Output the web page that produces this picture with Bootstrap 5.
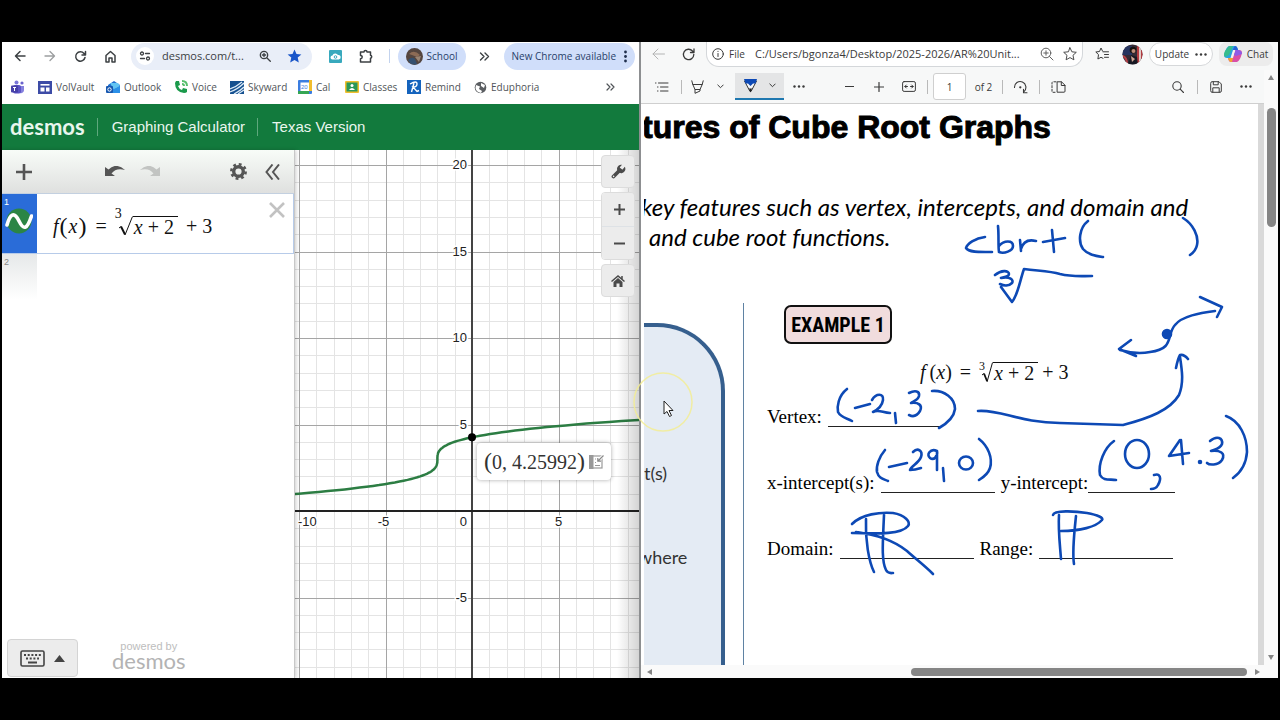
<!DOCTYPE html>
<html lang="en">
<head>
<meta charset="utf-8">
<meta name="viewport" content="width=device-width, initial-scale=1">
<title>Graphing Calculator and Cube Root Notes</title>
<link href="https://cdn.jsdelivr.net/npm/bootstrap@5.3.0/dist/css/bootstrap.min.css" rel="stylesheet">
<style>
  body { background: #000; padding: 42px 2px; font-family: "Open Sans", sans-serif; font-size: 11px; line-height: 16px; color: #3c4043; height: 100vh; }
  button { background: none; border: 0; padding: 0; color: inherit; display: flex; align-items: center; justify-content: center; flex-shrink: 0; }
  svg { display: block; flex-shrink: 0; }
  a { color: inherit; text-decoration: none; }
  input { background: none; border: 0; padding: 0; color: inherit; min-width: 0; outline: 0; }
  .line { fill: none; stroke: currentColor; stroke-linecap: round; stroke-linejoin: round; }
  .pane { flex: 1 1 0; min-width: 0; background: #fff; }
  .pane-left { border-right: 2px solid #8d8f91; }

  /* Chrome */
  .chrome-row { height: 28px; padding: 0 4px 0 3px; }
  .chrome-row button.ic { width: 30px; height: 28px; }
  .omni { background: #e9eef8; border-radius: 14px; height: 27px; margin-left: 6px; margin-right: 9px; padding: 0 10px 0 5px; }
  .omni input { width: 40px; }
  .site-info { width: 18px; height: 18px; border-radius: 9px; background: #fff; }
  .chip { background: #d0defa; border-radius: 14px; height: 27px; color: #28406a; font-size: 10px; }
  .vr-soft { width: 1px; height: 14px; background: #c3d3ee; }
  .marks { display: grid; grid-template-columns: 27px 68px 68px 56px 68px 47px 62px 67px 1fr 30px; height: 34px; padding: 0 14px 0 9px; align-items: center; font-size: 10px; color: #505458; }
  .marks a { display: flex; align-items: center; gap: 4px; white-space: nowrap; }
  .desmos-bar { background: #127a3d; height: 46px; font-family: "Liberation Sans", sans-serif; font-size: 15px; padding: 0 8px; color: #e9f6ee; }
  .brand-word { font-family: Lato, sans-serif; font-weight: 700; font-size: 22px; line-height: 24px; }
  .bar-line { width: 1px; height: 18px; background: #5fa87d; margin: 0 14px 0 12px; }

  /* Calculator */
  .exprs { width: 293px; border-right: 1px solid #c8c8c8; box-shadow: 1px 0 4px #0003; z-index: 1; background: #fff; flex-shrink: 0; }
  .expr-tools { height: 44px; background: linear-gradient(#f8fcf8, #dfe0df); border-bottom: 1px solid #c3d0e0; color: #555; padding: 0 5px 0 10px; }
  .undo-group { margin-left: 69px; gap: 15px; }
  .expr-one { height: 60px; border: solid #b7cbe9; border-width: 0 1px 1px 0; }
  .expr-tab { width: 35px; font: 9px/12px "Liberation Sans", sans-serif; padding: 2px 2px; }
  .expr-one .expr-tab { background: #2a6cd8; color: #fff; }
  .expr-two .expr-tab { height: 46px; color: #888; background: linear-gradient(#e6e8e9, #fff); }
  .serif-math { font-family: "Liberation Serif", serif; color: #111; white-space: nowrap; }
  .expr-math { font-size: 20px; line-height: 20px; padding: 5px 0 0 16px; }
  .paren { font-size: 24px; padding: 0 1px; }
  .radicand { border-top: 1px solid #111; padding: 0 4px 0 1px; }
  .root-index { font-size: 14px; line-height: 12px; align-self: flex-start; }
  .expr-math .root-index { margin: 9px -5px 0 0; }
  .fn .root-index { font-size: 12px; margin-right: -5px; }
  .kbd-btn { width: 71px; height: 38px; border: 1px solid #d4d4d4; border-radius: 4px; background: #ececec; color: #444; gap: 9px; }
  .powered { font: 11px/14px "Liberation Sans", sans-serif; color: #bdbdbd; margin: 0 0 8px 34px; }
  .powered .brand-word { font-weight: 400; font-size: 22px; line-height: 16px; color: #b3b3b3; }
  .graph { overflow: hidden; background: #fff; min-width: 0; }
  .graph::after { content: ""; position: absolute; inset: 0 0 0 auto; width: 22px; background: linear-gradient(90deg, #0000, #0000002b); }
  .graph text { font: 13px "Liberation Sans", sans-serif; fill: #222; paint-order: stroke; stroke: #fff; stroke-width: 3px; }
  .ctl { right: 4px; top: 5px; z-index: 2; width: 34px; color: #4a4a4a; }
  .ctl button { width: 34px; height: 33px; background: #ececec; }
  .ctl > * { border: 1px solid #dcdcdc; border-radius: 4px; overflow: hidden; }
  .coord { left: 182px; top: 293px; width: 134px; height: 37px; background: #fff; border-radius: 4px; box-shadow: 0 0 4px #0005; font: 20px/26px "Liberation Serif", serif; color: #333; }
  .coord .paren { padding: 0; }

  /* Edge */
  .edge { background: #f7f8f8; color: #3a3a3a; }
  .edge-row { height: 28px; padding: 0 5px 0 2px; }
  .edge-row button.ic { width: 30px; height: 24px; }
  .edge-omni { height: 25px; border: 1px solid #d4d7da; border-top: 0; border-radius: 0 0 13px 13px; background: #fff; margin-left: 3px; padding: 0 5px; gap: 5px; }
  .edge-omni .scheme { width: 21px; font-size: 10px; }
  .edge-chip { height: 24px; border: 1px solid #d6d8da; border-radius: 12px; background: #fff; gap: 6px; margin-left: 2px; width: 64px; font-size: 10px; }
  .chat-chip { height: 24px; border-radius: 8px; background: #ececec; gap: 5px; margin-left: 6px; width: 54px; font-size: 10px; }
  .pdf-tools { display: grid; height: 34px; padding: 0 6px 0 3px; align-items: center; justify-items: center; border-bottom: 1px solid #cfcfcf;
    grid-template-columns: 36px 2px 30px 16px 7px 49px 30px 20px 30px 29px 32px 4px 4px 33px 35px 2px 35px 2px 36px 1fr 36px 2px 36px 24px; }
  .tsep { width: 1px; height: 14px; background: #b9b9b9; }
  .pen-on { width: 49px; height: 27px; background: #e4e5e6; border-bottom: 2px solid #1f78b0; gap: 12px; }
  .pg-input { width: 33px; height: 27px; border: 1px solid #cfcfcf; border-radius: 3px; background: #fff; text-align: center; font-size: 10px; }
  .vbar { width: 14px; background: #fafafa; padding: 5px 3px; }
  .vthumb { width: 9px; height: 119px; border-radius: 5px; background: #858585; margin-top: 28px; }
  .hbar { height: 13px; background: #fafafa; padding: 0 18px 0 6px; }
  .hthumb { width: 336px; height: 8px; border-radius: 4px; background: #858585; }
  .sheet-wrap { padding-left: 3px; border-right: 6px solid #d9d9d9; background: #fff; min-height: 0; }
  .sheet { position: relative; height: 100%; overflow: hidden; color: #000; background: #fff; }
  .sheet-title { font: bold 32px/46px "Liberation Sans", sans-serif; -webkit-text-stroke: 1px #000; margin: 0 0 42px -2px; white-space: nowrap; color: #000; }
  .goal { font: italic 24px/30px Lato, sans-serif; margin: 0 0 51px -3px; white-space: nowrap; }
  .goal-cont { margin-left: 8px; }
  .notes-col { width: 100px; border-right: 1px solid #5f82a3; padding-top: 20px; flex-shrink: 0; }
  .blue-box { width: 81px; border: solid #365f8e; border-width: 4px 4px 0 0; border-radius: 0 68px 0 0; background: #e4ebf4; font: 18px/24px Lato, sans-serif; color: #333; padding-top: 134px; overflow: hidden; }
  .blue-box p { margin: 0 0 60px; }
  .blue-box p + p { margin-left: -6px; }
  .work { padding: 2px 0 0 23px; font: 19px/24px "Liberation Serif", serif; }
  .example { width: 108px; height: 39px; border: 2px solid #111; border-radius: 7px; background: #f0dcdd; margin-left: 17px; font: bold 20px/36px "Liberation Sans Narrow", "Roboto Condensed", sans-serif; text-align: center; }
  .fn { margin: 16px 0 21px 153px; height: 24px; font-size: 20px; }
  .blank { border-bottom: 1px solid #222; height: 22px; }
  .qrow { height: 24px; margin-bottom: 42px; gap: 6px; white-space: nowrap; }
  .ink { left: 0; top: 0; pointer-events: none; fill: none; stroke: #0d49b5; stroke-width: 2.6; stroke-linecap: round; stroke-linejoin: round; }
  .pointer { left: -10px; top: 328px; pointer-events: none; }
</style>
</head>
<body class="d-flex">

<section class="pane pane-left d-flex flex-column">
  <nav class="chrome-row d-flex align-items-center">
    <button class="ic" aria-label="Back"><svg width="12" height="12" viewBox="0 0 12 12" class="line" stroke-width="1.5"><path d="M11 6H2M6 1.500L1.500 6L6 10.500"/></svg></button>
    <button class="ic" aria-label="Forward"><svg width="12" height="12" viewBox="0 0 12 12" class="line" stroke-width="1.3" opacity=".5"><path d="M1 6h9M6 1.500L10.500 6L6 10.500"/></svg></button>
    <button class="ic" aria-label="Reload"><svg width="13" height="13" viewBox="0 0 13 13" class="line" stroke-width="1.5"><path d="M11 7.500A4.700 4.700 0 1 1 10 3.400L11.300 4.700M11.500 1.500V5H8"/></svg></button>
    <button class="ic" aria-label="Home"><svg width="13" height="13" viewBox="0 0 13 13" class="line" stroke-width="1.5"><path d="M2 12V5.500L6.500 1.500L11 5.500V12H8V8H5V12Z"/></svg></button>
    <div class="omni d-flex align-items-center flex-fill">
      <button class="site-info" aria-label="Site information"><svg width="12" height="10" viewBox="0 0 12 10" class="line" stroke-width="1.3"><circle cx="3" cy="2.500" r="1.500"/><path d="M6.500 2.500h4M1.500 7.500h4"/><circle cx="9" cy="7.500" r="1.500"/></svg></button>
      <input class="flex-fill ms-2" aria-label="Address" value="desmos.com/t...">
      <button class="me-3" aria-label="Zoom"><svg width="12" height="12" viewBox="0 0 12 12" class="line" stroke-width="1.300"><circle cx="5" cy="5" r="3.700"/><path d="M8 8l3.300 3.300M3.300 5h3.400M5 3.300v3.400"/></svg></button>
      <button aria-label="Bookmark"><svg width="15" height="14" viewBox="0 0 15 14" fill="#1a56c9"><path d="M7.500 .5L9.500 5l4.900.4-3.700 3.200 1.100 4.800-4.300-2.500-4.300 2.500 1.100-4.800L.6 5.400 5.500 5Z"/></svg></button>
    </div>
    <button class="ic" aria-label="Cloud extension"><svg width="13" height="13" viewBox="0 0 13 13"><rect width="13" height="13" rx="1" fill="#38a9bd"/><path d="M3.500 9.500a2 2 0 0 1 0-4A3 3 0 0 1 9 5a2.200 2.200 0 0 1 .8 4.500Z" fill="#fff"/><circle cx="6.500" cy="7" r="1.300" fill="none" stroke="#38a9bd"/></svg></button>
    <button class="ic" aria-label="Extensions"><svg width="14" height="14" viewBox="0 0 14 14" class="line" stroke-width="1.500"><path d="M1.500 3H5a1.500 1.500 0 0 1 3 0h3.500v3.200a1.600 1.600 0 0 1 0 3.100V13H1.500V9.800a1.700 1.700 0 0 0 0-3.400Z"/></svg></button>
    <span class="vr-soft ms-2 me-2"></span>
    <button class="chip px-2 gap-1"><svg width="17" height="17" viewBox="0 0 17 17"><circle cx="8.500" cy="8.500" r="8.500" fill="#54453f"/><path d="M3 6q5-5 11 1l-3 2-5-2Z" fill="#8d6b55"/><path d="M2 12q4-4 7-1l2 5q-6 2-9-4Z" fill="#35506f"/><path d="M9 9l6-1-2 6Z" fill="#9a8473"/></svg>School</button>
    <button class="ic ms-1" aria-label="More extensions"><svg width="11" height="9" viewBox="0 0 11 9" class="line" stroke-width="1.400"><path d="M1.500 1L5 4.500L1.500 8M6 1l3.500 3.500L6 8"/></svg></button>
    <button class="chip ms-1 px-2 gap-2">New Chrome available<svg width="3" height="13" viewBox="0 0 3 13" fill="#1f2f4d"><circle cx="1.500" cy="2" r="1.400"/><circle cx="1.500" cy="6.500" r="1.400"/><circle cx="1.500" cy="11" r="1.400"/></svg></button>
  </nav>

  <div class="marks">
    <a href="#" aria-label="Teams"><svg width="14" height="14" viewBox="0 0 14 14"><circle cx="5.500" cy="2.500" r="2" fill="#7b78d8"/><circle cx="11" cy="3" r="1.600" fill="#6a63cc"/><path d="M8 6h5v4a3 3 0 0 1-4 3Z" fill="#8580de"/><rect x="2" y="5" width="8" height="8.500" rx="2" fill="#5a53c4"/><rect x="0" y="5.500" width="7" height="7" rx="1" fill="#4640a8"/><path d="M2 7.500h3M3.500 7.500v3.500" stroke="#fff"/></svg></a>
    <a href="#"><svg width="14" height="13" viewBox="0 0 14 13"><rect width="14" height="13" fill="#3c4ba6"/><path d="M2.500 3.800h9" stroke="#fff" stroke-width="1.600"/><path d="M2.500 6.500h4v4h-4zM8 6.500h3.500v4H8z" fill="#fff"/></svg>VolVault</a>
    <a href="#"><svg width="14" height="14" viewBox="0 0 14 14"><path d="M2 5l6-4 6 4v7H2Z" fill="#1f6fd0"/><path d="M4 3h8l2 3-6 4Z" fill="#62c4f2"/><path d="M8 9l6-3v7H5Z" fill="#2b90e8"/><rect y="6" width="7" height="7" rx="1" fill="#1657b0"/><circle cx="3.500" cy="9.500" r="1.700" fill="none" stroke="#fff"/></svg>Outlook</a>
    <a href="#"><svg width="14" height="14" viewBox="0 0 14 14"><path d="M2 1l3 0 1 4-2 1q1 3 4 4l1-2 4 1v3q-1 1-3 1Q1 12 1 3Z" fill="#1b9a4b"/><path d="M8 1q5 0 5 5M8 4q2 0 2 2" fill="none" stroke="#58bf6d" stroke-width="2"/></svg>Voice</a>
    <a href="#"><svg width="14" height="13" viewBox="0 0 14 13"><rect width="14" height="13" fill="#15508f"/><path d="M0 8Q6 6 12 1M0 11Q8 8 14 2M4 13Q10 10 14 6M8 13l6-4" fill="none" stroke="#dcebf7" stroke-width="1.300"/></svg>Skyward</a>
    <a href="#"><svg width="14" height="14" viewBox="0 0 14 14"><rect width="14" height="14" rx="1" fill="#3b7de0"/><path d="M11 0h3v11h-3z" fill="#f2bd2c"/><path d="M0 11h11v3H0z" fill="#35a653"/><rect x="2.500" y="2.500" width="8.500" height="8.500" fill="#fff"/><text x="3" y="9" font-size="6" fill="#3b7de0" font-family="Liberation Sans, sans-serif">20</text></svg>Cal</a>
    <a href="#"><svg width="14" height="12" viewBox="0 0 14 12"><rect width="14" height="12" rx="1" fill="#f0bf2f"/><rect x="1.500" y="1.500" width="11" height="9" fill="#2b9757"/><circle cx="7" cy="4.500" r="1.500" fill="#fff"/><path d="M4 9q3-4 6 0Z" fill="#fff"/></svg>Classes</a>
    <a href="#"><svg width="14" height="14" viewBox="0 0 14 14"><rect width="14" height="14" fill="#1463bd"/><path d="M3 4q7-4 7 0 0 3-4 3l4 4.500 2-1M7 3L4.500 12" fill="none" stroke="#fff" stroke-width="1.400"/></svg>Remind</a>
    <a href="#"><svg width="13" height="13" viewBox="0 0 13 13"><circle cx="6.500" cy="6.500" r="5.800" fill="#5b5e62"/><path d="M2 4l4 1.500L5 8l3 2-1 2Q2 11 1.500 7ZM7 2l4 2-1 3-3-2Z" fill="#fff"/></svg>Eduphoria</a>
    <button aria-label="More bookmarks"><svg width="9" height="8" viewBox="0 0 9 8" class="line" stroke-width="1.200"><path d="M1 1l3 3-3 3M5 1l3 3-3 3"/></svg></button>
  </div>

  <header class="desmos-bar d-flex align-items-center">
    <a href="#" class="brand-word">desmos</a>
    <span class="bar-line"></span>
    <span>Graphing Calculator</span>
    <span class="bar-line"></span>
    <span>Texas Version</span>
  </header>

  <main class="d-flex flex-fill" style="min-height:0">
    <div class="exprs d-flex flex-column">
      <div class="expr-tools d-flex align-items-center">
        <button aria-label="Add item" style="width:24px"><svg width="16" height="16" viewBox="0 0 16 16" stroke="currentColor" stroke-width="2.600"><path d="M0 8h16M8 0v16"/></svg></button>
        <div class="undo-group d-flex">
          <button aria-label="Undo"><svg width="20" height="12" viewBox="0 0 20 12" fill="currentColor"><path d="M0 1v9h10L6.500 7.500Q11 1.500 20 4Q11-4 3.500 3.500Z"/></svg></button>
          <button aria-label="Redo"><svg width="20" height="12" viewBox="0 0 20 12" fill="#c2c4c2"><path d="M20 1v9H10l3.500-2.500Q9 1.500 0 4Q9-4 16.500 3.500Z"/></svg></button>
        </div>
        <button class="ms-auto me-2" aria-label="Settings"><svg width="17" height="17" viewBox="0 0 17 17"><circle cx="8.500" cy="8.500" r="4.800" fill="none" stroke="currentColor" stroke-width="3.400"/><circle cx="8.500" cy="8.500" r="7.200" fill="none" stroke="currentColor" stroke-width="2.500" stroke-dasharray="2.830 2.830"/></svg></button>
        <button aria-label="Hide list" style="width:34px"><svg width="15" height="16" viewBox="0 0 15 16" fill="none" stroke="currentColor" stroke-width="2"><path d="M7.500 .5L1.500 8l6 7.500M14 .5L8 8l6 7.500"/></svg></button>
      </div>
      <div class="expr-one d-flex">
        <div class="expr-tab">1
          <svg width="29" height="26" viewBox="0 0 29 26"><circle cx="15" cy="13" r="12.500" fill="#2b8545"/><path d="M3 17C6 6 10 3 15 13S23 21 27.500 8" fill="none" stroke="#fff" stroke-width="3.600" stroke-linecap="round"/></svg>
        </div>
        <div class="expr-math serif-math d-flex align-items-center flex-fill">
          <i>f</i><span class="paren">(</span><i>x</i><span class="paren">)</span><span class="ms-2 me-2">=</span><span class="root-index">3</span><svg width="16" height="20" viewBox="0 0 16 20" fill="none" stroke="#111"><path d="M2 12l2-1.500" /><path d="M4 10.500L8 18.500" stroke-width="2"/><path d="M8 19L15.500 .5"/></svg><span class="radicand"><i>x</i> + 2</span><span class="ms-2">+ 3</span>
        </div>
        <button class="align-self-start mt-2 me-2" aria-label="Delete expression"><svg width="16" height="16" viewBox="0 0 16 16" stroke="#c2c2c2" stroke-width="2.600"><path d="M1 1l14 14M15 1L1 15"/></svg></button>
      </div>
      <div class="expr-two"><div class="expr-tab">2</div></div>
      <div class="mt-auto d-flex align-items-center" style="padding:0 0 1px 5px">
        <button class="kbd-btn" aria-label="Keypad"><svg width="25" height="17" viewBox="0 0 25 17"><rect x="1" y="1" width="23" height="15" rx="1.500" fill="none" stroke="currentColor" stroke-width="1.600"/><path d="M4 5h17M6 8.500h13" stroke="currentColor" stroke-width="2" stroke-dasharray="2 1.700"/><path d="M8 12.500h9" stroke="currentColor" stroke-width="2"/></svg><svg width="11" height="7" viewBox="0 0 11 7" fill="currentColor"><path d="M0 7L5.500 0L11 7Z"/></svg></button>
        <a href="#" class="powered text-center"><span class="d-block">powered by</span><span class="d-block brand-word">desmos</span></a>
      </div>
    </div>

    <div class="graph position-relative flex-fill">
      <svg id="plot" width="100%" height="100%" role="img" aria-label="Graph of f(x)"></svg>
      <div class="ctl position-absolute d-flex flex-column gap-1">
        <button aria-label="Graph settings"><svg width="15" height="15" viewBox="0 0 15 15"><path d="M2.500 12.500L9 6" stroke="currentColor" stroke-width="3.800" stroke-linecap="round"/><path d="M13.800 2.800A4.200 4.200 0 1 1 11 .8L8.800 3.200L9.300 5.200L11.600 5.600Z" fill="currentColor"/><circle cx="2.600" cy="12.400" r=".8" fill="#ececec"/></svg></button>
        <div><button aria-label="Zoom in"><svg width="11" height="11" viewBox="0 0 11 11" stroke="currentColor" stroke-width="2"><path d="M0 5.500h11M5.500 0v11"/></svg></button><button aria-label="Zoom out" class="border-top"><svg width="11" height="11" viewBox="0 0 11 11" stroke="currentColor" stroke-width="2"><path d="M0 5.500h11"/></svg></button></div>
        <button aria-label="Default view"><svg width="14" height="12" viewBox="0 0 14 12"><path d="M2.500 7L7 3l4.500 4v5h-3V8.500h-3V12h-3Z" fill="currentColor"/><path d="M.5 6.500L7 1l6.500 5.500M11 1v3" fill="none" stroke="currentColor" stroke-width="1.500"/></svg></button>
      </div>
      <div class="coord position-absolute d-flex align-items-center justify-content-center gap-1"><span><span class="paren">(</span>0, 4.25992<span class="paren">)</span></span><svg width="15" height="14" viewBox="0 0 15 14"><rect x="1" y="1" width="12" height="12" fill="none" stroke="#999" stroke-width="1.200"/><rect width="4.500" height="14" fill="#999"/><path d="M6 4h3M6 7.500h5M6 10.500h5" stroke="#999"/><path d="M15 0L9 6M8.500 3v3.500H12" fill="none" stroke="#fff" stroke-width="3"/><path d="M14.500 .5L9 6M8.800 3v3.200H12" fill="none" stroke="#888" stroke-width="1.200"/></svg></div>
    </div>
  </main>
</section>

<section class="pane edge d-flex flex-column position-relative">
  <nav class="edge-row d-flex align-items-start">
    <button class="ic" aria-label="Back"><svg width="13" height="12" viewBox="0 0 13 12" class="line" opacity=".35"><path d="M12.500 6H1M6 1L1 6l5 5"/></svg></button>
    <button class="ic" aria-label="Refresh"><svg width="13" height="13" viewBox="0 0 13 13" class="line" stroke-width="1.300"><path d="M11.800 6.500A5.200 5.200 0 1 1 10.500 3L11.800 4.300M12 1v3.500H8.500"/></svg></button>
    <div class="edge-omni d-flex align-items-center flex-fill">
      <svg width="12" height="12" viewBox="0 0 12 12" class="line"><circle cx="6" cy="6" r="5.300"/><path d="M6 5.500v3M6 3.300v.2"/></svg>
      <span class="scheme">File</span>
      <input class="flex-fill" aria-label="File address" value="C:/Users/bgonza4/Desktop/2025-2026/AR%20Unit...">
      <button aria-label="Zoom" class="me-1"><svg width="14" height="14" viewBox="0 0 14 14" class="line" opacity=".8"><circle cx="6" cy="6" r="4.800"/><path d="M9.500 9.500l3.500 3.500M3.800 6h4.400M6 3.800v4.400"/></svg></button>
      <button aria-label="Favourite"><svg width="14" height="14" viewBox="0 0 14 14" class="line" opacity=".9"><path d="M7 .8l1.900 4 4.400.5-3.300 3 .9 4.500L7 10.600l-3.900 2.200L4 8.300l-3.300-3 4.400-.5Z"/></svg></button>
    </div>
    <button class="ic ms-1" aria-label="Favourites"><svg width="15" height="14" viewBox="0 0 15 14" class="line"><path d="M8 4.800H13.500M9.500 7.500h4M9.500 10.300h4M7.500 4L6 1 4.500 4.500 .8 5l2.700 2.600-.6 4.400L6 10.300l2 1"/></svg></button>
    <button class="ic" aria-label="Profile"><svg width="21" height="21" viewBox="0 0 21 21"><clipPath id="av"><circle cx="10.500" cy="10.500" r="10"/></clipPath><g clip-path="url(#av)"><rect width="21" height="21" fill="#352b35"/><path d="M0 2h10v9H0z" fill="#26345f"/><path d="M15 0h2v21h-2zM19 0h2v21h-2z" fill="#b33a3f"/><path d="M17 0h2v21h-2z" fill="#e0c9c5"/><path d="M1 12q4 2 4 8" stroke="#b54047" stroke-width="2" fill="none"/><circle cx="11" cy="6" r="3.300" fill="#15110f"/><circle cx="11.500" cy="7" r="2" fill="#c08e7a"/><path d="M6 20l3-9 6 2 1 8Z" fill="#171923"/><path d="M9 12l4 3-3 3Z" fill="#d2a594"/></g></svg></button>
    <button class="edge-chip">Update<svg width="12" height="3" viewBox="0 0 12 3" fill="currentColor"><circle cx="1.500" cy="1.500" r="1.200"/><circle cx="6" cy="1.500" r="1.200"/><circle cx="10.500" cy="1.500" r="1.200"/></svg></button>
    <button class="chat-chip"><svg width="18" height="18" viewBox="0 0 18 18"><path d="M5 1h6q2 0 2.500 2L14 5H9L6.500 13H3Q0 13 0 10Q2 2 5 1Z" fill="#2aa4df"/><path d="M5 1h4L5 10 1 12Q-1 10 1 6Z" fill="#37bc8c"/><path d="M11 1q2 0 3 4H9l1-3Z" fill="#2861d8"/><path d="M13 17H7q-2 0-2.500-2L4 13h5L11.500 5H15Q18 5 18 8q-2 8-5 9Z" fill="#d94fa7"/><path d="M4 13h5l-1 4H7q-2 0-3-4Z" fill="#f3a42f"/><path d="M11.500 5H15q3 1 3 4l-6 2-2-1Z" fill="#8e5ce6"/><path d="M9.500 5.500h1.500L8.500 12.500H7Z" fill="#f4f4f4"/></svg>Chat</button>
  </nav>

  <div class="d-flex flex-fill" style="min-height:0">
    <div class="d-flex flex-column flex-fill" style="min-width:0">
      <div class="pdf-tools">
        <button aria-label="Contents"><svg width="14" height="10" viewBox="0 0 14 10" class="line"><path d="M3.500 1H13M5.500 5H13M5.500 9H13M.5 1h.5M2.500 5h.5M2.500 9h.5"/></svg></button>
        <span class="tsep"></span>
        <button aria-label="Highlight"><svg width="13" height="14" viewBox="0 0 13 14" class="line"><path d="M.8 .8L1.800 4.500H11.200L12.200 .8M1.800 4.500L4 9.500H9L11.200 4.500M4 9.500V13.300L9 11V9.500"/></svg></button>
        <button aria-label="Highlight colours"><svg width="7" height="5" viewBox="0 0 7 5" class="line"><path d="M.8 1l2.700 2.700L6.200 1"/></svg></button>
        <span></span>
        <button class="pen-on" aria-label="Draw"><svg width="13" height="14" viewBox="0 0 13 14"><path d="M.5 2h12L7 12.500H6Z" fill="#f4f6fa" stroke="#333"/><path d="M0 0h13L11.500 4.500H9L6.500 7 4 4.500H1.500Z" fill="#0d49b5"/><path d="M5 9.500h3L6.500 13.500Z" fill="#222"/></svg><svg width="7" height="5" viewBox="0 0 7 5" class="line"><path d="M.8 1l2.700 2.700L6.200 1"/></svg></button>
        <button aria-label="More tools"><svg width="12" height="3" viewBox="0 0 12 3" fill="currentColor"><circle cx="1.500" cy="1.500" r="1.200"/><circle cx="6" cy="1.500" r="1.200"/><circle cx="10.500" cy="1.500" r="1.200"/></svg></button>
        <span></span>
        <button aria-label="Zoom out"><svg width="9" height="9" viewBox="0 0 9 9" class="line" stroke-width="1.200"><path d="M.5 4.500h8"/></svg></button>
        <button aria-label="Zoom in"><svg width="10" height="10" viewBox="0 0 10 10" class="line" stroke-width="1.200"><path d="M.5 5h9M5 .5v9"/></svg></button>
        <button aria-label="Fit to width"><svg width="14" height="11" viewBox="0 0 14 11" class="line"><rect x=".6" y=".6" width="12.800" height="9.800" rx="1.500"/><path d="M3 5.500h2.500M8.500 5.500H11M4.300 4L2.800 5.500 4.300 7M9.700 4l1.500 1.500L9.700 7"/></svg></button>
        <span class="tsep"></span><span></span>
        <input class="pg-input" aria-label="Page" value="1">
        <span style="font-size:10px">of 2</span>
        <span class="tsep"></span>
        <button aria-label="Rotate"><svg width="15" height="14" viewBox="0 0 15 14" class="line" stroke-width="1.100"><path d="M1.500 7.500A5.700 5.700 0 1 1 11 11.500M14 12.800H10.500V9.300"/><circle cx="7.300" cy="7.300" r=".6"/></svg></button>
        <span class="tsep"></span>
        <button aria-label="Page view"><svg width="15" height="12" viewBox="0 0 15 12" class="line"><path d="M6.500 .8h4L14 4.200v6q0 1-1 1H6.500ZM10.300 1v3.500H14"/><path d="M5 .8H2Q1 .8 1 2v8.500q0 .8 1 .8h3" stroke-dasharray="2 1.600"/></svg></button>
        <span></span>
        <button aria-label="Search"><svg width="12" height="12" viewBox="0 0 12 12" class="line" stroke-width="1.100"><circle cx="5" cy="5" r="4.200"/><path d="M8.200 8.200l3.300 3.300"/></svg></button>
        <span class="tsep"></span>
        <button aria-label="Save"><svg width="12" height="12" viewBox="0 0 12 12" class="line"><path d="M.7 2q0-1.300 1.300-1.300h7L11.300 3v7q0 1.300-1.300 1.300H2Q.7 11.300 .7 10ZM3.300 1v2.800h4.900V1M2.800 11V6.800h6.400V11"/></svg></button>
        <button aria-label="More"><svg width="12" height="3" viewBox="0 0 12 3" fill="currentColor"><circle cx="1.500" cy="1.500" r="1.200"/><circle cx="6" cy="1.500" r="1.200"/><circle cx="10.500" cy="1.500" r="1.200"/></svg></button>
      </div>

      <div class="sheet-wrap flex-fill">
        <article class="sheet d-flex flex-column">
          <h1 class="sheet-title">tures of Cube Root Graphs</h1>
          <p class="goal">key features such as vertex, intercepts, and domain and<br><span class="goal-cont">and cube root functions.</span></p>
          <div class="d-flex flex-fill">
            <div class="notes-col d-flex">
              <div class="blue-box"><p>t(s)</p><p>where</p></div>
            </div>
            <div class="work flex-fill">
              <div class="example">EXAMPLE 1</div>
              <div class="fn serif-math d-flex align-items-center"><i>f</i>&thinsp;<span>(<i>x</i>)</span><span class="ms-2 me-2">=</span><span class="root-index">3</span><svg width="13" height="21" viewBox="0 0 13 21" fill="none" stroke="#111"><path d="M2 13l2-1.500"/><path d="M4 11.500L7 19" stroke-width="1.800"/><path d="M7 20L12.500 .5"/></svg><span class="radicand" style="line-height:20px"><i>x</i> + 2</span><span class="ms-1">+ 3</span></div>
              <div class="qrow d-flex"><span>Vertex:</span><span class="blank" style="width:112px"></span></div>
              <div class="qrow d-flex"><span>x-intercept(s):</span><span class="blank" style="width:114px"></span><span>y-intercept:<span class="blank d-inline-block align-top" style="width:87px"></span></span></div>
              <div class="qrow d-flex"><span>Domain:</span><span class="blank" style="width:134px"></span><span>Range:</span><span class="blank" style="width:134px"></span></div>
            </div>
          </div>
          <svg class="ink position-absolute" width="613" height="561" viewBox="644 104 613 561" aria-hidden="true">
            <path d="M985 237C975 238 967 244 966 248C969 253 982 252 992 252M998 226C999 236 998 246 999 252M999 246C1004 240 1013 240 1013 246C1013 251 1004 254 999 252M1020 240L1021 251M1021 249C1023 242 1028 239 1036 241M1052 230L1054 252M1043 242L1065 238"/>
            <path d="M1088 221C1079 228 1078 242 1083 249C1088 255 1096 256 1103 257M1183 218C1193 224 1199 236 1197 245C1196 250 1193 253 1190 255"/>
            <path d="M995 275C1001 270 1009 270 1009 274C1009 277 1003 277 1001 278C1010 276 1014 280 1012 283C1009 286 1004 286 1000 284M1001 287L1012 302C1018 295 1020 280 1024 269C1040 271 1050 271 1060 274C1072 277 1080 276 1092 276"/>
            <path d="M1200 297L1222 307L1217 317M1215 311C1200 313 1182 316 1175 325C1166 335 1175 349 1150 352C1140 354 1127 352 1120 350M1131 340L1119 349L1136 356"/>
            <circle cx="1167" cy="334" r="4" fill="#0d49b5"/>
            <path d="M978 411C1000 409 1020 423 1060 423L1123 425C1150 418 1170 410 1179 395C1184 383 1182 370 1180 357M1176 368Q1178 358 1180 355Q1184 354 1188 359"/>
            <path d="M847 389C838 396 837 407 838 412C841 418 847 418 852 421M855 408L870 404M872 400C876 393 884 393 883 400C882 407 875 411 873 412C879 409 883 413 890 413M895 413L896 423M909 393C915 390 920 391 919 396C918 400 914 401 911 403C918 402 923 405 920 411C917 416 913 417 909 415M932 391C944 390 955 398 955 409C954 417 946 424 939 428"/>
            <path d="M885 450C879 457 876 466 877 472C879 479 884 479 888 481M889 467L907 463M913 452C918 447 923 451 921 457C919 463 911 466 910 470C915 470 918 469 921 468M937 451C930 448 926 455 930 458C934 461 938 456 937 451L937 470M943 468L944 481M979 439C988 446 993 458 990 468C988 474 984 477 979 480"/>
            <ellipse cx="966" cy="463" rx="7" ry="6.500"/>
            <path d="M1114 441C1104 448 1098 464 1100 475C1103 481 1110 479 1116 480M1154 475C1160 473 1162 478 1158 485C1156 489 1153 489 1151 489M1180 440L1169 456L1189 453M1181 440L1183 464M1200 462v.5M1210 441C1217 435 1223 438 1222 444C1220 449 1215 449 1211 451C1220 450 1226 453 1222 460C1218 466 1209 465 1207 463M1226 416C1240 421 1247 437 1247 452C1246 466 1240 473 1233 478"/>
            <circle cx="1200" cy="462" r="1"/>
            <ellipse cx="1137" cy="454" rx="12" ry="14"/>
            <path d="M852 524C862 514 880 512 893 513C905 515 911 522 908 526C902 534 880 534 852 533M866 519C865 540 869 562 874 572M884 515C883 540 881 560 886 570C888 574 891 573 893 573M856 532C880 535 897 543 907 551C917 560 925 566 933 574"/>
            <path d="M1053 515C1054 510 1075 511 1087 513C1098 515 1104 518 1102 520C1096 527 1080 531 1061 531M1059 515C1058 530 1060 545 1061 559M1076 516C1074 535 1072 552 1074 564"/>
          </svg>
        </article>
      </div>
    </div>
    <div class="vbar d-flex flex-column align-items-center">
      <svg width="6" height="5" viewBox="0 0 6 5" fill="#858585"><path d="M0 5L3 0L6 5Z"/></svg>
      <div class="vthumb"></div>
      <svg class="mt-auto" width="6" height="5" viewBox="0 0 6 5" fill="#858585"><path d="M0 0L3 5L6 0Z"/></svg>
    </div>
  </div>
  <div class="hbar d-flex align-items-center">
    <svg width="5" height="6" viewBox="0 0 5 6" fill="#858585"><path d="M5 0L0 3L5 6Z"/></svg>
    <div class="hthumb ms-auto me-2"></div>
    <svg width="5" height="6" viewBox="0 0 5 6" fill="#858585"><path d="M0 0L5 3L0 6Z"/></svg>
  </div>
  <svg class="pointer position-absolute" width="64" height="64" viewBox="0 0 64 64" aria-hidden="true"><circle cx="32" cy="32" r="29" fill="none" stroke="#f4ee8f" stroke-width="1.500" stroke-opacity=".8"/><path d="M33 31v13l3-2.500 2.500 5 2-1-2.500-5h4Z" fill="#fff" stroke="#222"/></svg>
</section>

<script src="https://cdn.jsdelivr.net/npm/bootstrap@5.3.0/dist/js/bootstrap.bundle.min.js"></script>
<script>
  // Grid, axes, labels and the curve y = cbrt(x + 2) + 3
  const unit = 17.3, ox = 177, oy = 361;
  const X = x => ox + x * unit, Y = y => oy - y * unit;
  let out = '';
  const rule = (v, vertical, colour, w) => {
    const p = Math.round(vertical ? X(v) : Y(v)) + .5 * (w % 2);
    return vertical ? `<path d="M${p} 0V2000" stroke="${colour}" stroke-width="${w}"/>`
                    : `<path d="M0 ${p}H2000" stroke="${colour}" stroke-width="${w}"/>`;
  };
  for (const pass of [1, 5])
    for (const vertical of [true, false])
      for (let v = -60; v <= 100; v++)
        if (v && (v % 5 === 0) === (pass === 5)) out += rule(v, vertical, pass === 5 ? '#a5a5a5' : '#e4e4e4', 1);
  out += rule(0, true, '#444', 2) + rule(0, false, '#222', 2);
  for (const y of [20, 15, 10, 5, -5]) out += `<text x="${X(0) - 5}" y="${Y(y) + 4}" text-anchor="end">${y}</text>`;
  out += `<text x="${X(0) - 5}" y="${Y(0) + 15}" text-anchor="end">0</text>`;
  out += `<text x="3" y="${Y(0) + 15}">-10</text>`;
  for (const x of [-5, 5]) out += `<text x="${X(x) - (x < 0 ? 2 : 0)}" y="${Y(0) + 15}" text-anchor="middle">${x}</text>`;
  let d = '';
  for (let y = -3; y <= 8; y += .05) d += (d ? 'L' : 'M') + X((y - 3) ** 3 - 2).toFixed(1) + ' ' + Y(y).toFixed(1);
  out += `<path d="${d}" fill="none" stroke="#2c7d43" stroke-width="2.500"/>`;
  out += `<circle cx="${X(0)}" cy="${Y(4.25992)}" r="4" fill="#000"/>`;
  document.getElementById('plot').innerHTML = out;
</script>
</body>
</html>
